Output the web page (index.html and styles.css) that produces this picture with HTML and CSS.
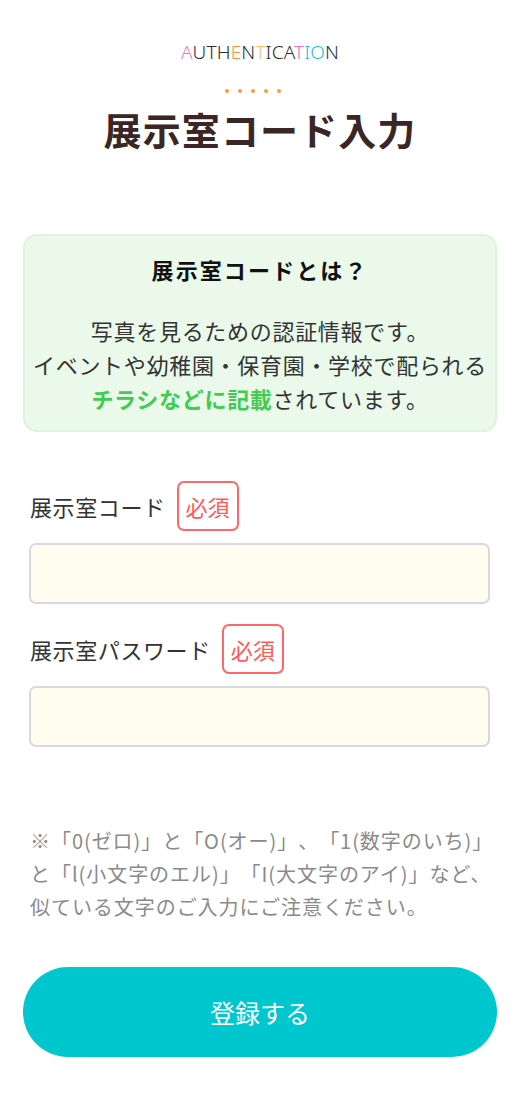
FILE: index.html
```html
<!DOCTYPE html>
<html lang="ja">
<head>
<meta charset="utf-8">
<link rel="stylesheet" href="styles.css">
</head>
<body>
<main class="page">
  <header class="head">
    <p class="eyebrow"><span class="c-pink">A</span><span class="c-navy">U</span><span class="c-dark">T</span><span class="c-dark">H</span><span class="c-orange">E</span><span class="c-navy">N</span><span class="c-yellow">T</span><span class="c-dark">I</span><span class="c-dark">C</span><span class="c-dark">A</span><span class="c-pink">T</span><span class="c-cyan">I</span><span class="c-cyan">O</span><span class="c-navy">N</span></p>
    <div class="dots"><span></span><span></span><span></span><span></span><span></span></div>
    <h1 class="title">展示室コード入力</h1>
  </header>

  <section class="info">
    <h2 class="info-title">展示室コードとは？</h2>
    <p class="info-text">写真を見るための認証情報です。<br>イベントや幼稚園・保育園・学校で配られる<br><strong class="hl">チラシなどに記載</strong>されています。</p>
  </section>

  <form class="form">
    <div class="field">
      <label class="label">展示室コード<span class="req">必須</span></label>
      <input class="input" type="text">
    </div>
    <div class="field">
      <label class="label">展示室パスワード<span class="req">必須</span></label>
      <input class="input" type="password">
    </div>
  </form>

  <p class="note">※「0(ゼロ)」と「O(オー)」、「1(数字のいち)」<br>と「l(小文字のエル)」「I(大文字のアイ)」など、<br>似ている文字のご入力にご注意ください。</p>

  <button class="submit" type="button">登録する</button>
</main>
</body>
</html>
```
FILE: styles.css
```css
* { box-sizing: border-box; }
html, body { margin: 0; padding: 0; background: #fff; }
body {
  font-family: "Noto Sans CJK JP", "Noto Sans", sans-serif;
  color: #333;
  text-spacing-trim: space-all;
}
.page {
  padding: 40px 23px 40px;
}
.head {
  display: flex;
  flex-direction: column;
  align-items: center;
}
.eyebrow {
  margin: 0;
  font-family: "Noto Sans", "Noto Sans CJK JP", sans-serif;
  font-size: 19px;
  font-weight: 300;
  line-height: 24px;
  letter-spacing: 0.15px;
}
.c-pink { color: #ff6fb5; }
.c-navy { color: #23324a; }
.c-dark { color: #2b2b2b; }
.c-orange { color: #ff8c3a; }
.c-yellow { color: #ffc46b; }
.c-cyan { color: #22c3d4; }
.dots {
  display: flex;
  gap: 9px;
  margin-top: 25px;
  padding-right: 14px;
}
.dots span {
  width: 4px;
  height: 4px;
  border-radius: 50%;
  background: #ff9a3c;
}
.title {
  margin: 10px 0 0;
  font-size: 38px;
  font-weight: 700;
  line-height: 52px;
  color: #3b2626;
  letter-spacing: 1.1px;
}
.info {
  margin-top: 79px;
  background: #ebf9eb;
  border: 2px solid #dcf5dc;
  border-radius: 14px;
  padding: 17px 4px 15px;
  text-align: center;
}
.info-title {
  margin: 0;
  font-size: 22px;
  font-weight: 700;
  line-height: 32px;
  color: #111;
  letter-spacing: 2.1px;
}
.info-text {
  margin: 28px 0 0;
  font-size: 22px;
  font-weight: 400;
  line-height: 34px;
  color: #333;
  letter-spacing: 0.7px;
}
.hl {
  color: #3fcc4f;
  font-weight: 700;
}
.form {
  margin-top: 49px;
  padding: 0 7px 0 6px;
  display: flex;
  flex-direction: column;
  gap: 20px;
}
.field {
  display: flex;
  flex-direction: column;
  gap: 12px;
}
.label {
  display: flex;
  align-items: center;
  gap: 11px;
  height: 50px;
  font-size: 22px;
  line-height: 30px;
  color: #333;
  padding-left: 1px;
  letter-spacing: 0.6px;
}
.req {
  display: inline-flex;
  align-items: center;
  justify-content: center;
  height: 50px;
  padding: 0 7px 0 7px;
  border: 2px solid #ff6868;
  border-radius: 7px;
  color: #ff5a5a;
  font-size: 22px;
  line-height: 1;
  letter-spacing: 0;
}
.input {
  display: block;
  width: 100%;
  height: 61px;
  background: #fffcf0;
  border: 2px solid #d6d9dd;
  border-radius: 7px;
  font-size: 20px;
  padding: 0 12px;
  outline: none;
}
.note {
  margin: 77px 0 0;
  padding-left: 7px;
  font-size: 20px;
  line-height: 33px;
  color: #8a8a8a;
  letter-spacing: 0.95px;
}
.submit {
  display: block;
  width: 100%;
  margin-top: 44px;
  height: 90px;
  border: none;
  border-radius: 45px;
  background: #00c7ce;
  color: #fff;
  font-family: "Noto Sans CJK JP", sans-serif;
  font-size: 25px;
  font-weight: 400;
}
```
